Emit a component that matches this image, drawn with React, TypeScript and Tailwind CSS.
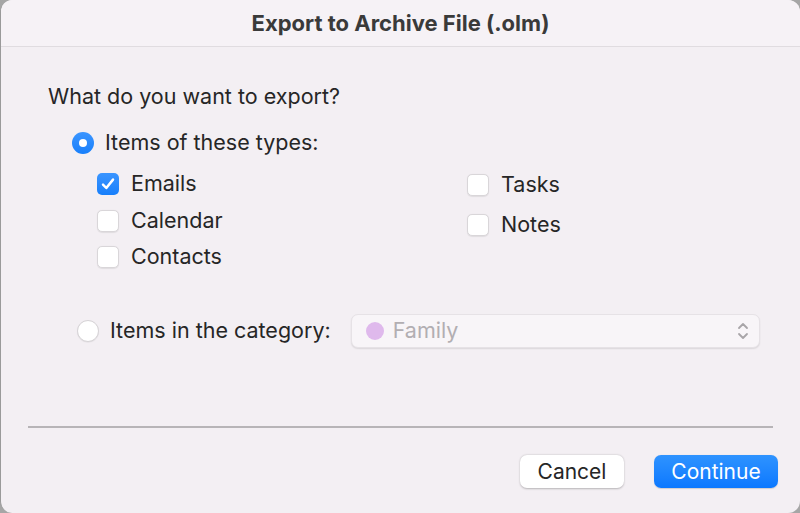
import React from "react";

function Checkbox({ checked }: { checked?: boolean }) {
  if (checked) {
    return (
      <div className="w-[22px] h-[22px] rounded-[5px] bg-gradient-to-b from-[#3a95ff] to-[#167ffb] flex items-center justify-center shrink-0">
        <svg width="16" height="16" viewBox="0 0 16 16" fill="none">
          <path d="M3 8.6 L6.3 12 L13 3.6" stroke="white" strokeWidth="2.5" strokeLinecap="round" strokeLinejoin="round" />
        </svg>
      </div>
    );
  }
  return (
    <div className="w-[22px] h-[22px] rounded-[5px] bg-white border border-[#d9d6d9] shadow-[0_0.5px_1px_rgba(0,0,0,0.08)] shrink-0" />
  );
}

function Radio({ checked }: { checked?: boolean }) {
  if (checked) {
    return (
      <div className="w-[22px] h-[22px] rounded-full bg-gradient-to-b from-[#3a95ff] to-[#167ffb] flex items-center justify-center shrink-0">
        <div className="w-[8px] h-[8px] rounded-full bg-white" />
      </div>
    );
  }
  return <div className="w-[22px] h-[22px] rounded-full bg-white border border-[#d6d3d6] shadow-[0_0.5px_1px_rgba(0,0,0,0.08)] shrink-0" />;
}

function Item({ checked, label }: { checked?: boolean; label: string }) {
  return (
    <div className="flex items-center gap-[12px] h-[22px]">
      <Checkbox checked={checked} />
      <span>{label}</span>
    </div>
  );
}

export default function App() {
  return (
    <div
      className="w-[800px] h-[513px] bg-[#a6a6a6] overflow-hidden text-[#262626]"
      style={{ fontFamily: "Inter, 'Noto Sans', sans-serif" }}
    >
      <div className="w-full h-full rounded-[12px] bg-[#f3eff3] border-l border-[#9a9a9a] flex flex-col overflow-hidden">
        <div className="h-[47px] bg-[#f6f2f6] border-b border-[#e0dce0] flex items-center justify-center shrink-0">
          <span className="text-[22px] font-bold text-[#3a3a3a]">Export to Archive File (.olm)</span>
        </div>
        <div className="flex-1 flex flex-col text-[21.5px] leading-none">
          <div className="pl-[47px] pt-[39px]">What do you want to export?</div>
          <div className="pl-[71px] pt-[24.5px] flex items-center gap-[11px]">
            <Radio checked />
            <span>Items of these types:</span>
          </div>
          <div className="pl-[96px] pt-[19px] grid grid-cols-[370px_auto]">
            <div className="flex flex-col gap-[14.5px]">
              <Item checked label="Emails" />
              <Item label="Calendar" />
              <Item label="Contacts" />
            </div>
            <div className="flex flex-col gap-[18px] pt-[1px]">
              <Item label="Tasks" />
              <Item label="Notes" />
            </div>
          </div>
          <div className="pl-[76px] pr-[40px] pt-[46px] flex items-center">
            <Radio />
            <span className="ml-[11px]">Items in the category:</span>
            <div className="ml-[20px] flex-1 h-[34px] rounded-[7px] bg-[#f8f5f8] border border-[#e6e2e6] shadow-[0_1px_1.5px_rgba(0,0,0,0.1)] flex items-center pl-[14px] pr-[10px]">
              <div className="w-[18px] h-[18px] rounded-full bg-[#dfb9ec]" />
              <span className="ml-[9px] text-[#b2aeb2]">Family</span>
              <div className="flex-1" />
              <svg width="12" height="22" viewBox="0 0 12 22" fill="none">
                <path d="M2 8 L6 4 L10 8" stroke="#a8a5a8" strokeWidth="1.8" strokeLinecap="round" strokeLinejoin="round" />
                <path d="M2 14 L6 18 L10 14" stroke="#a8a5a8" strokeWidth="1.8" strokeLinecap="round" strokeLinejoin="round" />
              </svg>
            </div>
          </div>
          <div className="mx-[27px] mt-[78px] h-[2px] bg-[#b7b4b7]" />
          <div className="flex justify-end gap-[30px] pr-[22px] pt-[27px]">
            <button className="w-[104px] h-[33px] rounded-[7px] bg-white shadow-[0_0.5px_2px_rgba(0,0,0,0.25)] text-[21px] text-[#262626]">
              Cancel
            </button>
            <button className="w-[124px] h-[33px] rounded-[7px] bg-gradient-to-b from-[#2e93ff] to-[#0a78ff] text-[21px] text-white shadow-[0_0.5px_1px_rgba(0,0,0,0.15)]">
              Continue
            </button>
          </div>
        </div>
      </div>
    </div>
  );
}
